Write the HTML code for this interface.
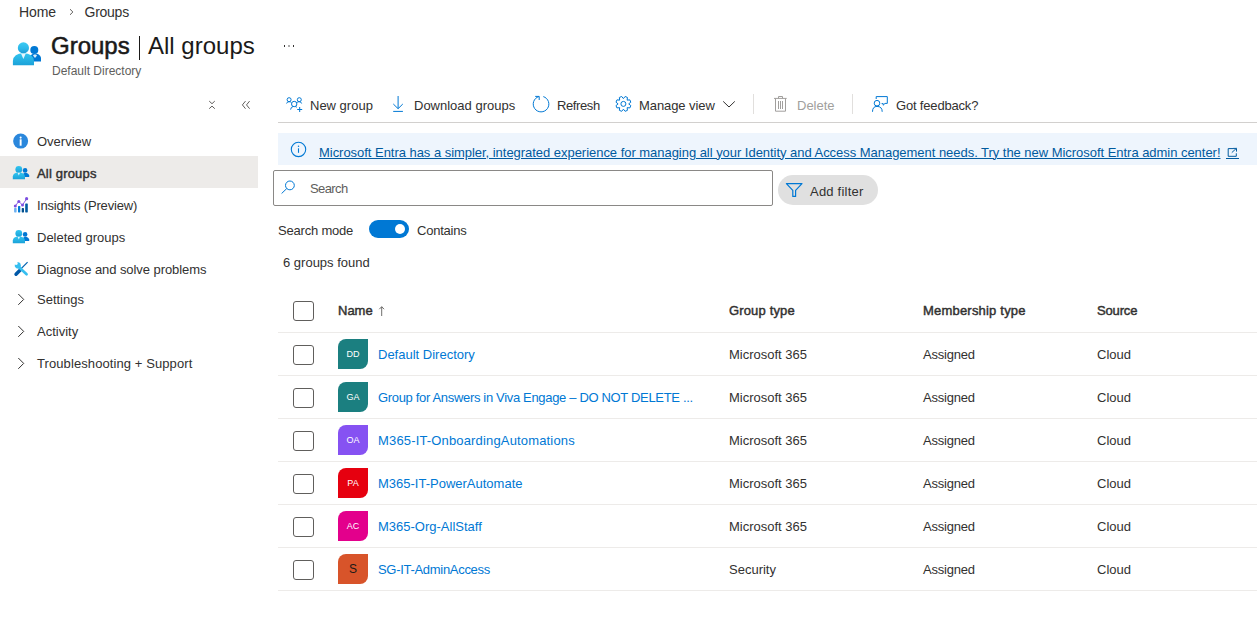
<!DOCTYPE html>
<html><head><meta charset="utf-8">
<style>
html,body{margin:0;padding:0;background:#fff;width:1257px;height:637px;overflow:hidden;}
body{font-family:"Liberation Sans",sans-serif;font-size:13px;color:#323130;position:relative;}
.t{position:absolute;white-space:nowrap;line-height:16px;font-size:13px;}
.a{position:absolute;}
svg{position:absolute;overflow:visible;}
.hl{position:absolute;left:278px;width:979px;height:1px;background:#edebe9;}
.cb{position:absolute;left:293px;width:21px;height:20px;box-sizing:border-box;border:1px solid #605e5c;border-radius:3px;}
.av{position:absolute;left:338px;width:30px;height:30px;border-radius:8px 0 8px 0;color:#fff;font-size:9px;line-height:31.5px;text-align:center;}
.lk{color:#0078d4;}
.b{font-weight:400;-webkit-text-stroke:0.45px currentColor;}
</style></head>
<body>
<!-- breadcrumb -->
<div class="t" style="left:19px;top:4px;font-size:14px;letter-spacing:-0.1px;">Home</div>
<div class="t" style="left:84.5px;top:4px;font-size:14px;letter-spacing:-0.25px;">Groups</div>

<!-- title -->
<div class="t" style="left:51px;top:30px;font-size:24px;line-height:32px;color:#1b1a19;-webkit-text-stroke:0.55px #1b1a19;">Groups</div>
<div class="a" style="left:138.5px;top:36px;width:1.6px;height:24px;background:#1b1a19;"></div>
<div class="t" style="left:148px;top:30px;font-size:24px;line-height:32px;color:#1b1a19;">All groups</div>
<div class="t" style="left:52px;top:62.5px;font-size:12px;color:#605e5c;">Default Directory</div>

<!-- sidebar -->
<div class="a" style="left:0;top:156px;width:258px;height:32px;background:#edebe9;"></div>
<div class="t" style="left:37px;top:134px;">Overview</div>
<div class="t b" style="left:37px;top:166px;letter-spacing:0.18px;">All groups</div>
<div class="t" style="left:37px;top:198px;letter-spacing:-0.18px;">Insights (Preview)</div>
<div class="t" style="left:37px;top:230px;">Deleted groups</div>
<div class="t" style="left:37px;top:261.5px;letter-spacing:-0.07px;">Diagnose and solve problems</div>
<div class="t" style="left:37px;top:291.5px;">Settings</div>
<div class="t" style="left:37px;top:323.5px;">Activity</div>
<div class="t" style="left:37px;top:355.5px;letter-spacing:0.09px;">Troubleshooting + Support</div>

<!-- toolbar -->
<div class="t" style="left:310px;top:97.5px;">New group</div>
<div class="t" style="left:414px;top:97.5px;">Download groups</div>
<div class="t" style="left:557px;top:97.5px;letter-spacing:-0.4px;">Refresh</div>
<div class="t" style="left:639px;top:97.5px;letter-spacing:-0.08px;">Manage view</div>
<div class="t" style="left:797px;top:97.5px;color:#a19f9d;">Delete</div>
<div class="t" style="left:896px;top:97.5px;letter-spacing:-0.18px;">Got feedback?</div>
<div class="a" style="left:753px;top:94px;width:1px;height:20px;background:#e1dfdd;"></div>
<div class="a" style="left:852px;top:94px;width:1px;height:20px;background:#e1dfdd;"></div>
<div class="a" style="left:278px;top:122px;width:979px;height:1px;background:#d2d0ce;"></div>

<!-- banner -->
<div class="a" style="left:278px;top:133px;width:979px;height:32px;background:#eef5fd;"></div>
<div class="t" style="left:319px;top:144.5px;color:#005a9e;text-decoration:underline;letter-spacing:-0.035px;">Microsoft Entra has a simpler, integrated experience for managing all your Identity and Access Management needs. Try the new Microsoft Entra admin center!</div>

<!-- search -->
<div class="a" style="left:273px;top:170px;width:500px;height:36px;box-sizing:border-box;border:1px solid #8a8886;border-radius:2px;"></div>
<div class="t" style="left:310px;top:180.5px;color:#605e5c;letter-spacing:-0.6px;">Search</div>
<div class="a" style="left:778px;top:175px;width:100px;height:30px;border-radius:15px;background:#e0e0e0;"></div>
<div class="t" style="left:810px;top:184px;letter-spacing:0.22px;">Add filter</div>

<div class="t" style="left:278px;top:222.5px;letter-spacing:-0.2px;">Search mode</div>
<div class="a" style="left:369px;top:220px;width:40px;height:18px;border-radius:9px;background:#0078d4;"></div>
<div class="a" style="left:395px;top:224px;width:10px;height:10px;border-radius:5px;background:#fff;"></div>
<div class="t" style="left:417px;top:222.5px;letter-spacing:-0.22px;">Contains</div>
<div class="t" style="left:283px;top:255px;">6 groups found</div>

<!-- table -->
<div class="cb" style="top:301px;"></div>
<div class="t b" style="left:338px;top:302.5px;">Name</div>
<div class="t b" style="left:729px;top:302.5px;letter-spacing:0.15px;">Group type</div>
<div class="t b" style="left:923px;top:302.5px;letter-spacing:0.2px;">Membership type</div>
<div class="t b" style="left:1097px;top:302.5px;letter-spacing:-0.15px;">Source</div>
<div class="hl" style="top:332px;"></div>
<div class="cb" style="top:345px;"></div>
<div class="av" style="top:339px;background:#1b7f80;">DD</div>
<div class="t lk" style="left:378px;top:346.5px;">Default Directory</div>
<div class="t" style="left:729px;top:346.5px;">Microsoft 365</div>
<div class="t" style="left:923px;top:346.5px;letter-spacing:-0.2px;">Assigned</div>
<div class="t" style="left:1097px;top:346.5px;">Cloud</div>
<div class="hl" style="top:375px;"></div>
<div class="cb" style="top:388px;"></div>
<div class="av" style="top:382px;background:#1b7f80;">GA</div>
<div class="t lk" style="left:378px;top:389.5px;letter-spacing:-0.33px;">Group for Answers in Viva Engage – DO NOT DELETE ...</div>
<div class="t" style="left:729px;top:389.5px;">Microsoft 365</div>
<div class="t" style="left:923px;top:389.5px;letter-spacing:-0.2px;">Assigned</div>
<div class="t" style="left:1097px;top:389.5px;">Cloud</div>
<div class="hl" style="top:418px;"></div>
<div class="cb" style="top:431px;"></div>
<div class="av" style="top:425px;background:#8652f2;">OA</div>
<div class="t lk" style="left:378px;top:432.5px;letter-spacing:0.16px;">M365-IT-OnboardingAutomations</div>
<div class="t" style="left:729px;top:432.5px;">Microsoft 365</div>
<div class="t" style="left:923px;top:432.5px;letter-spacing:-0.2px;">Assigned</div>
<div class="t" style="left:1097px;top:432.5px;">Cloud</div>
<div class="hl" style="top:461px;"></div>
<div class="cb" style="top:474px;"></div>
<div class="av" style="top:468px;background:#e6000f;">PA</div>
<div class="t lk" style="left:378px;top:475.5px;">M365-IT-PowerAutomate</div>
<div class="t" style="left:729px;top:475.5px;">Microsoft 365</div>
<div class="t" style="left:923px;top:475.5px;letter-spacing:-0.2px;">Assigned</div>
<div class="t" style="left:1097px;top:475.5px;">Cloud</div>
<div class="hl" style="top:504px;"></div>
<div class="cb" style="top:517px;"></div>
<div class="av" style="top:511px;background:#e3008c;">AC</div>
<div class="t lk" style="left:378px;top:518.5px;">M365-Org-AllStaff</div>
<div class="t" style="left:729px;top:518.5px;">Microsoft 365</div>
<div class="t" style="left:923px;top:518.5px;letter-spacing:-0.2px;">Assigned</div>
<div class="t" style="left:1097px;top:518.5px;">Cloud</div>
<div class="hl" style="top:547px;"></div>
<div class="cb" style="top:560px;"></div>
<div class="av" style="top:554px;background:#d8542a;color:#1b1a19;font-size:12px;line-height:30px;">S</div>
<div class="t lk" style="left:378px;top:561.5px;letter-spacing:-0.3px;">SG-IT-AdminAccess</div>
<div class="t" style="left:729px;top:561.5px;">Security</div>
<div class="t" style="left:923px;top:561.5px;letter-spacing:-0.2px;">Assigned</div>
<div class="t" style="left:1097px;top:561.5px;">Cloud</div>
<div class="hl" style="top:590px;"></div>

<!-- ICONS -->
<!-- breadcrumb chevron -->
<svg style="left:0;top:0" width="1" height="1"><path d="M70 9.2 L72.9 12 L70 14.8" fill="none" stroke="#605e5c" stroke-width="1"/></svg>
<!-- title icon -->
<svg style="left:0;top:0" width="1" height="1">
<defs>
<linearGradient id="gbig" x1="0" y1="0" x2="0" y2="1"><stop offset="0" stop-color="#32c5f0"/><stop offset="1" stop-color="#1ba1d8"/></linearGradient>
</defs>
<circle cx="34.3" cy="50" r="4" fill="#0078d4"/>
<path d="M29.7 61.4 L29.7 57 Q31 53.4 35 53.4 Q39.5 53.4 41 57.5 L41 61.4 Z" fill="#0078d4"/>
<path d="M34 54.5 L33 55.5 L35 58 L37 55.5 L36 54.5Z" fill="#d9ecfa"/>
<linearGradient id="ghead" x1="0" y1="0" x2="0" y2="1"><stop offset="0" stop-color="#3ccbf3"/><stop offset="0.55" stop-color="#2cb8ea"/><stop offset="1" stop-color="#1e9ad4"/></linearGradient>
<circle cx="23.4" cy="47.9" r="5.6" fill="url(#ghead)"/>
<path d="M12.9 65.3 L12.9 61 Q13.5 53.3 23.4 53.3 Q33.3 53.3 34 61 L34 65.3 Z" fill="url(#gbig)"/>
<path d="M21 53.6 L23.4 59 L25.8 53.6 Z" fill="#e6f5fc"/>
</svg>
<!-- ellipsis -->
<svg style="left:0;top:0" width="1" height="1"><g fill="#323130"><rect x="284" y="45" width="1" height="2"/><rect x="288.5" y="45" width="1" height="2" opacity="0.8"/><rect x="293" y="45" width="1" height="2"/></g></svg>
<!-- sidebar close & collapse -->
<svg style="left:0;top:0" width="1" height="1"><g fill="none" stroke="#605e5c" stroke-width="1">
<path d="M209.2 101.1 L212 103.7 L214.8 101.1 M209.2 108.7 L212 106.1 L214.8 108.7"/>
<path d="M245.5 101.1 L242.4 104.9 L245.5 108.7 M249.6 101.1 L246.5 104.9 L249.6 108.7"/>
</g></svg>
<!-- sidebar icons -->
<svg style="left:0;top:0" width="1" height="1">
<defs>
<linearGradient id="gsm" x1="0" y1="0" x2="0" y2="1"><stop offset="0" stop-color="#32c5f0"/><stop offset="1" stop-color="#1ba1d8"/></linearGradient>
</defs>
<circle cx="20.65" cy="141.1" r="7.5" fill="#2a87dc"/>
<rect x="19.7" y="139.3" width="1.9" height="6.4" fill="#fff"/>
<circle cx="20.65" cy="137.6" r="1.05" fill="#fff"/>
<g id="grp">
<circle cx="25.1" cy="170.4" r="2.3" fill="#0078d4"/>
<path d="M22.6 176.9 L22.6 175 Q23.5 172.8 25.3 172.8 Q28.3 172.8 29.2 175.5 L29.2 176.9Z" fill="#0078d4"/>
<circle cx="18.8" cy="169.5" r="3.4" fill="url(#gsm)"/>
<path d="M12.8 179.3 L12.8 176.5 Q13.2 172.6 18.8 172.6 Q24.5 172.6 25 176.5 L25 179.3Z" fill="url(#gsm)"/>
<path d="M17.6 172.8 L18.8 175.6 L20 172.8Z" fill="#e6f5fc"/>
</g>
<use href="#grp" transform="translate(0,64)"/>
<!-- insights -->
<rect x="14.1" y="208.1" width="2.5" height="4.3" rx="0.6" fill="#6cb0f0"/>
<rect x="18" y="205.9" width="2.3" height="6.5" rx="0.6" fill="#0078d4"/>
<rect x="21.7" y="208.1" width="2.3" height="4.3" rx="0.6" fill="#004e8c"/>
<rect x="25.2" y="203.4" width="2.6" height="9" rx="0.6" fill="#005ba1"/>
<path d="M15.3 205.9 L18.8 201.4 L22.5 205.1 L26.6 198.7" fill="none" stroke="#8a5ee8" stroke-width="1"/>
<g fill="#7c4fe0"><circle cx="15.3" cy="205.9" r="1.5"/><circle cx="18.8" cy="201.4" r="1.5"/><circle cx="22.5" cy="205.1" r="1.5"/><circle cx="26.6" cy="198.7" r="1.6"/></g>
<!-- wrench & screwdriver -->
<path d="M27.6 262.2 L21.3 268.5" stroke="#0063b1" stroke-width="1.1" fill="none"/>
<path d="M20.5 269.8 L16 274.3" stroke="#0058a8" stroke-width="3.4" stroke-linecap="round" fill="none"/>
<path d="M18.5 266.8 L26.6 274.3" stroke="#36bff0" stroke-width="2.6" stroke-linecap="round" fill="none"/>
<path d="M17.3 262 Q18.2 263.3 17.4 264.5 Q16.2 265.4 14.8 264.6 Q14.2 266.8 16 268 Q17.8 269 19.8 268 L20.3 267.6 Q21.4 265.8 20.4 263.6 Q19.8 262.3 17.3 262Z" fill="#36bff0"/>
<!-- chevrons -->
<g fill="none" stroke="#323130" stroke-width="1">
<path d="M18.3 294 L23.7 299.4 L18.3 304.8"/>
<path d="M18.3 326 L23.7 331.4 L18.3 336.8"/>
<path d="M18.3 358 L23.7 363.4 L18.3 368.8"/>
</g>
</svg>
<!-- toolbar icons -->
<svg style="left:0;top:0" width="1" height="1"><g fill="none" stroke="#0078d4" stroke-width="1">
<!-- new group -->
<circle cx="289.1" cy="99.7" r="2"/>
<circle cx="299.3" cy="99.7" r="2"/>
<circle cx="294.2" cy="104" r="2.7"/>
<path d="M286.6 103.5 Q287 101.7 289.1 101.7 Q290.5 101.7 291.3 102.4"/>
<path d="M301.6 103.5 Q301.2 101.7 299.3 101.7 Q297.9 101.7 297.1 102.4"/>
<path d="M290.6 109.6 Q291 106.8 293 106.6 M295.4 106.6 Q296.4 106.8 296.9 107.4"/>
<path d="M297.2 109.5 L302.2 109.5 M299.7 107 L299.7 112"/>
<!-- download -->
<path d="M398.1 96 L398.1 108.4"/>
<path d="M393.3 104 L398.1 108.7 L402.8 104"/>
<path d="M393.2 111.4 L402.9 111.4"/>
<!-- refresh -->
<path d="M543.3 96.6 A7.8 7.8 0 1 1 538.8 96.6"/>
<path d="M535.2 96.4 L539.2 96.4 L539.2 100"/>
<!-- chevron down -->
<path d="M723.2 101.4 L729 107 L734.8 101.4" stroke="#323130"/>
</g>
<!-- gear -->
<g transform="translate(623.4 103.9)" fill="none" stroke="#0078d4" stroke-width="1">
<path d="M0.00 -5.30 L1.71 -7.41 L4.03 -6.45 L3.75 -3.75 L6.45 -4.03 L7.41 -1.71 L5.30 -0.00 L7.41 1.71 L6.45 4.03 L3.75 3.75 L4.03 6.45 L1.71 7.41 L0.00 5.30 L-1.71 7.41 L-4.03 6.45 L-3.75 3.75 L-6.45 4.03 L-7.41 1.71 L-5.30 0.00 L-7.41 -1.71 L-6.45 -4.03 L-3.75 -3.75 L-4.03 -6.45 L-1.71 -7.41Z"/>
<circle r="2.5"/>
</g>
<!-- trash -->
<g fill="none" stroke="#a19f9d" stroke-width="1">
<path d="M774 98.4 L786.7 98.4"/>
<path d="M778.5 98.4 L778.5 96.5 L782.5 96.5 L782.5 98.4"/>
<path d="M775.5 98.4 L775.5 111.2 L785.5 111.2 L785.5 98.4"/>
<path d="M778.5 101 L778.5 109 M780.5 101 L780.5 109 M782.5 101 L782.5 109"/>
</g>
<!-- feedback -->
<g fill="none" stroke="#0078d4" stroke-width="1">
<path d="M876.2 99 L876.2 96.6 L887.3 96.6 L887.3 103.4 L885 103.4 L883.2 105.2 L883.2 103.6 L881.6 103.6"/>
<circle cx="877" cy="103.2" r="2.8"/>
<path d="M872.5 111.8 Q872.5 106.4 877 106.4 Q882.2 106.4 882.2 111.8"/>
</g>
<!-- separators handled by divs -->
<!-- banner info -->
<g fill="none" stroke="#0078d4" stroke-width="1.1">
<circle cx="298.5" cy="149.4" r="7.2"/>
<path d="M298.5 148.3 L298.5 152.8"/>
</g>
<circle cx="298.5" cy="146.3" r="0.75" fill="#0078d4"/>
<!-- external link -->
<g fill="none" stroke="#005a9e" stroke-width="1">
<path d="M1233.7 148.6 L1228.2 148.6 L1228.2 156.3 L1236.3 156.3 L1236.3 153.3"/>
<path d="M1231.8 152.6 L1236.3 148.4 M1233.2 148.4 L1236.5 148.4 L1236.5 151.6"/>
<path d="M1226 158.5 L1239 158.5"/>
</g>
<!-- search -->
<g fill="none" stroke="#0078d4" stroke-width="1">
<circle cx="289.9" cy="185.4" r="4.4"/>
<path d="M286.8 188.5 L281.6 193.5"/>
</g>
<!-- filter -->
<path d="M786.4 183.6 L802 183.6 L795.6 190.4 L795.6 196.4 L792.8 196.4 L792.8 190.4 Z" fill="none" stroke="#0078d4" stroke-width="1.2" stroke-linejoin="round"/>
<!-- sort arrow -->
<g fill="none" stroke="#605e5c" stroke-width="0.9">
<path d="M381.7 306.8 L381.7 316 M379.3 309.2 L381.7 306.7 L384.1 309.2"/>
</g>
</svg>
</body></html>
